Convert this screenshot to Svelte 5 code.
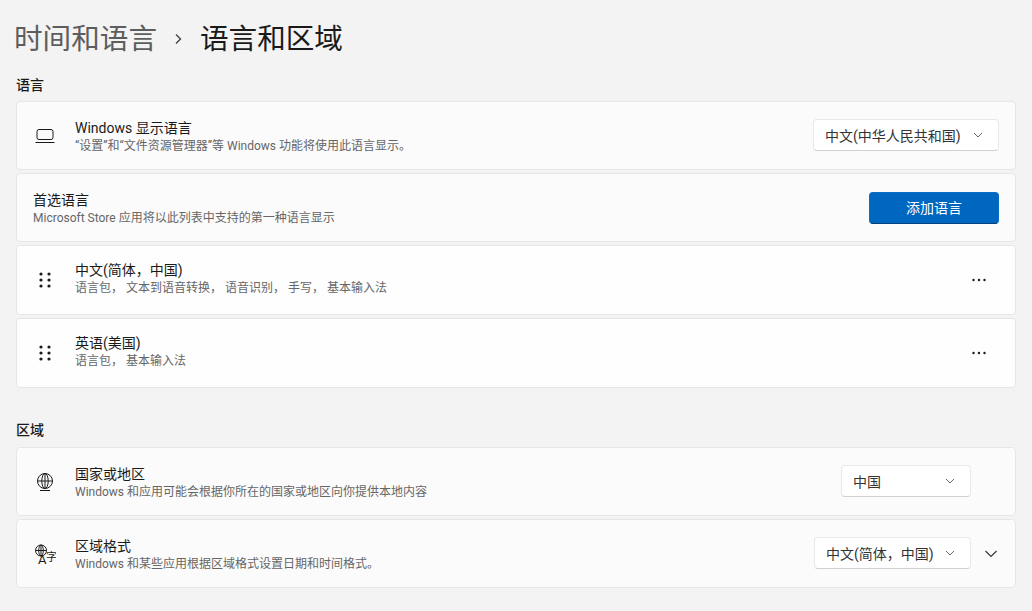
<script>
  const languages = [
    { name: '中文(简体，中国)', desc: '语言包， 文本到语音转换， 语音识别， 手写， 基本输入法' },
    { name: '英语(美国)', desc: '语言包， 基本输入法' }
  ];
</script>

<main class="page">
  <header class="crumbs">
    <span class="parent">时间和语言</span>
    <svg class="sep" width="10" height="12" viewBox="0 0 10 12"><path d="M3 1.5 7.5 6 3 10.5" fill="none" stroke="#444" stroke-width="1.4"/></svg>
    <span class="current">语言和区域</span>
  </header>

  <h2 class="section first">语言</h2>
  <div class="cards">
    <div class="card">
      <svg class="icon" width="20" height="16" viewBox="0 0 20 16">
        <rect x="2" y="1.5" width="16" height="10" rx="2" fill="none" stroke="#1a1a1a"/>
        <path d="M0.5 14.5h19" stroke="#1a1a1a"/>
      </svg>
      <div class="text">
        <div class="title">Windows 显示语言</div>
        <div class="desc">“设置”和“文件资源管理器”等 Windows 功能将使用此语言显示。</div>
      </div>
      <div class="select wide"><span>中文(中华人民共和国)</span>
        <svg width="10" height="6" viewBox="0 0 10 6"><path d="M1 1l4 4 4-4" fill="none" stroke="#666"/></svg>
      </div>
    </div>

    <div class="card plain">
      <div class="text">
        <div class="title">首选语言</div>
        <div class="desc">Microsoft Store 应用将以此列表中支持的第一种语言显示</div>
      </div>
      <button class="primary">添加语言</button>
    </div>

    {#each languages as lang}
      <div class="card white tall">
        <svg class="icon" width="20" height="18" viewBox="0 0 20 18">
          {#each [2, 8, 14] as y}
            <circle cx="6" cy={y + 1} r="1.6" fill="#1a1a1a"/>
            <circle cx="14" cy={y + 1} r="1.6" fill="#1a1a1a"/>
          {/each}
        </svg>
        <div class="text">
          <div class="title">{lang.name}</div>
          <div class="desc">{lang.desc}</div>
        </div>
        <svg class="more" width="16" height="4" viewBox="0 0 16 4">
          <circle cx="2.5" cy="2" r="1.2" fill="#1a1a1a"/>
          <circle cx="8" cy="2" r="1.2" fill="#1a1a1a"/>
          <circle cx="13.5" cy="2" r="1.2" fill="#1a1a1a"/>
        </svg>
      </div>
    {/each}
  </div>

  <h2 class="section second">区域</h2>
  <div class="cards">
    <div class="card">
      <svg class="icon" width="20" height="20" viewBox="0 0 20 20" fill="none" stroke="#1a1a1a">
        <circle cx="10" cy="9" r="7.5"/>
        <ellipse cx="10" cy="9" rx="3.2" ry="7.5"/>
        <path d="M2.5 9h15M10 1.5v15M5 18.5h10"/>
      </svg>
      <div class="text">
        <div class="title">国家或地区</div>
        <div class="desc">Windows 和应用可能会根据你所在的国家或地区向你提供本地内容</div>
      </div>
      <div class="select region"><span>中国</span>
        <svg width="10" height="6" viewBox="0 0 10 6"><path d="M1 1l4 4 4-4" fill="none" stroke="#666"/></svg>
      </div>
      <div class="spacer"></div>
    </div>

    <div class="card">
      <svg class="icon" width="22" height="22" viewBox="0 0 22 22" fill="none" stroke="#1a1a1a">
        <circle cx="7" cy="7.5" r="5.5"/>
        <ellipse cx="7" cy="7.5" rx="2.3" ry="5.5"/>
        <path d="M1.5 7.5h11M7 2v11"/>
        <text class="glyph a" x="4" y="20.5">A</text>
        <text class="glyph zi" x="12" y="17.5">字</text>
      </svg>
      <div class="text">
        <div class="title">区域格式</div>
        <div class="desc">Windows 和某些应用根据区域格式设置日期和时间格式。</div>
      </div>
      <div class="select format"><span>中文(简体，中国)</span>
        <svg width="10" height="6" viewBox="0 0 10 6"><path d="M1 1l4 4 4-4" fill="none" stroke="#666"/></svg>
      </div>
      <svg class="expand" width="14" height="8" viewBox="0 0 14 8"><path d="M1.5 1 7 6.5 12.5 1" fill="none" stroke="#333" stroke-width="1.1"/></svg>
    </div>
  </div>
</main>

<style>
  :global(body) {
    background: #f3f3f3;
    font-family: Roboto, "Noto Sans CJK SC", sans-serif;
    color: #1a1a1a;
  }

  .page {
    height: 611px;
    box-sizing: border-box;
    padding: 19px 16px 0;
    overflow: hidden;
  }

  .crumbs {
    display: flex;
    align-items: center;
    height: 40px;
    margin-left: -2px;
    font-size: 28.6px;
    line-height: 40px;
  }

  .parent {
    color: #5d5d5d;
  }

  .sep {
    margin: 0 17px 0 16px;
  }

  .current {
    color: #1a1a1a;
  }

  .section {
    margin: 0;
    font-size: 14px;
    font-weight: 500;
    line-height: 20px;
  }

  .section.first {
    margin-top: 16px;
    margin-bottom: 6px;
  }

  .section.second {
    margin-top: 32px;
    margin-bottom: 7px;
  }

  .cards {
    display: flex;
    flex-direction: column;
    gap: 3px;
  }

  .card {
    display: flex;
    align-items: center;
    box-sizing: border-box;
    height: 69px;
    padding: 0 16px 0 16px;
    background: #fbfbfb;
    border: 1px solid #e6e6e6;
    border-radius: 4px;
  }

  .card.white {
    background: #fefefe;
  }

  .card.tall {
    height: 70px;
  }

  .tall .text {
    padding-top: 0;
    padding-bottom: 2px;
  }

  .icon {
    flex: none;
    width: 22px;
    margin-left: 1px;
    margin-right: 19px;
  }

  .text {
    flex: 1;
    min-width: 0;
    padding-top: 2px;
  }

  .title {
    margin-top: -1px;
    margin-bottom: 1px;
    font-size: 14px;
    line-height: 19px;
  }

  .desc {
    font-size: 12px;
    line-height: 15px;
    color: #666;
  }

  .select {
    display: flex;
    align-items: center;
    justify-content: space-between;
    box-sizing: border-box;
    height: 32px;
    margin-bottom: 1px;
    padding: 0 15px 0 11px;
    font-size: 14px;
    color: #333;
    background: #fff;
    border: 1px solid #e8e8e8;
    border-bottom-color: #d0d0d0;
    border-radius: 4px;
  }

  .select span {
    padding-bottom: 1px;
  }

  .select.wide {
    width: 186px;
  }

  .select.region {
    width: 130px;
  }

  .select.format {
    width: 157px;
  }

  .spacer {
    width: 28px;
  }

  .primary {
    width: 130px;
    height: 32px;
    padding: 0 0 2px;
    font: inherit;
    font-size: 14px;
    color: #fff;
    background: #0067c0;
    border: 1px solid #0a6cc3;
    border-bottom-color: #033f7a;
    border-radius: 4px;
  }

  .more {
    margin-right: 12px;
  }

  .expand {
    margin-left: 13px;
    margin-right: 1px;
  }

  .glyph {
    fill: #1a1a1a;
    stroke: none;
    font-family: Roboto, "Noto Sans CJK SC", sans-serif;
  }

  .glyph.a {
    font-size: 13px;
  }

  .glyph.zi {
    font-size: 11px;
  }
</style>
